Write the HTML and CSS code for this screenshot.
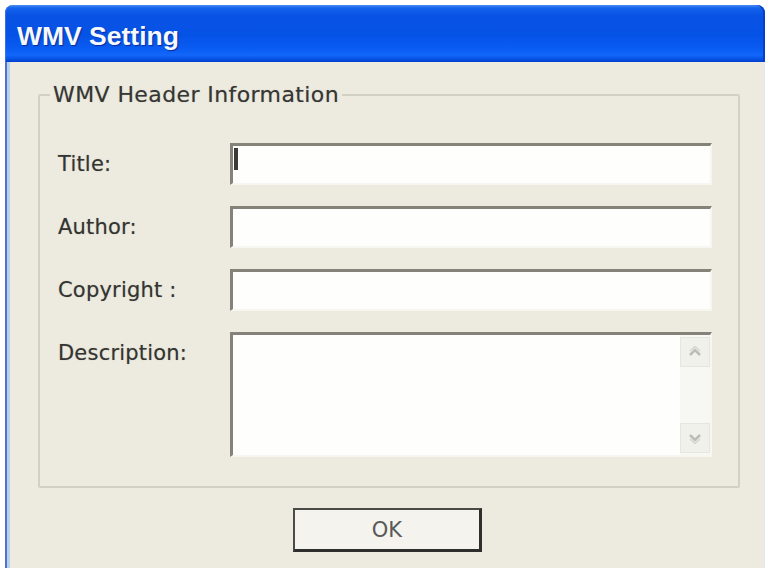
FILE: index.html
```html
<!DOCTYPE html>
<html lang="en">
<head>
<meta charset="utf-8">
<title>WMV Setting</title>
<link rel="stylesheet" href="styles.css">
</head>
<body>
<div class="window">
  <div class="titlebar"><span class="title">WMV Setting</span></div>
  <div class="content">
    <fieldset class="group">
      <legend class="group-label">WMV Header Information</legend>
      <div class="form">
        <label class="label">Title:</label>
        <div class="field"><span class="caret"></span></div>
        <label class="label">Author:</label>
        <div class="field"></div>
        <label class="label">Copyright :</label>
        <div class="field"></div>
        <label class="label">Description:</label>
        <div class="field area">
          <div class="scrollbar">
            <div class="sb-btn">
              <svg width="16" height="12" viewBox="0 0 16 12"><polyline points="3,9 8,4 13,9" fill="none" stroke="#bdbdb8" stroke-width="2.5"/><polyline points="3,5 8,0.5 13,5" fill="none" stroke="#d6d6d0" stroke-width="1.5"/></svg>
            </div>
            <div class="sb-track"></div>
            <div class="sb-btn">
              <svg width="16" height="12" viewBox="0 0 16 12"><polyline points="3,3 8,8 13,3" fill="none" stroke="#bdbdb8" stroke-width="2.5"/><polyline points="3,7 8,11.5 13,7" fill="none" stroke="#d6d6d0" stroke-width="1.5"/></svg>
            </div>
          </div>
        </div>
      </div>
    </fieldset>
    <div class="actions"><button class="ok">OK</button></div>
  </div>
</div>
</body>
</html>
```
FILE: styles.css
```css
html, body {
  margin: 0;
  padding: 0;
  background: #ffffff;
  overflow: hidden;
}
body {
  font-family: "DejaVu Sans", Verdana, sans-serif;
}
.window {
  margin: 5px 0 0 5px;
  width: 760px;
  height: 563px;
  display: flex;
  flex-direction: column;
}
.titlebar {
  box-sizing: border-box;
  height: 57px;
  padding: 16px 0 0 12px;
  border-radius: 8px 8px 0 0;
  background: linear-gradient(to bottom, #4a8ff0 0px, #1462ee 3px, #0a54e4 10px, #0552e6 30px, #0a5cf2 44px, #1268fa 50px, #0a58ec 53px, #0340cc 57px);
  box-shadow: inset 1px 0 #3a6fe0, inset -2px 0 #0a3ec8;
}
.title {
  font-family: "Liberation Sans", Arial, sans-serif;
  font-weight: bold;
  font-size: 26.5px;
  line-height: 30px;
  color: #f4f8ff;
  text-shadow: 1px 1px 1px #0b2a9a;
}
.content {
  flex: 1;
  box-sizing: border-box;
  background: #edebdf;
  border-left: 2px solid #5273c0;
  box-shadow: inset 3px 0 #b8d0f2, inset -1px 0 #e6e8ee;
  padding: 21px 25px 0 31px;
}
.group {
  margin: 0;
  padding: 0;
  border: 2px solid #d3d1c4;
  border-radius: 2px;
  min-width: 0;
}
.group-label {
  margin-left: 10px;
  padding: 0 3px;
  font-size: 22px;
  letter-spacing: 0.4px;
  line-height: 24px;
  color: #363634;
  text-shadow: 0 0 1px rgba(40, 40, 38, 0.35);
}
.form {
  display: grid;
  grid-template-columns: 172px 482px;
  grid-template-rows: 42px 42px 42px 125px;
  row-gap: 21px;
  padding: 36px 0 29px 18px;
}
.label {
  font-size: 21px;
  letter-spacing: 0.2px;
  line-height: 24px;
  padding-top: 9px;
  color: #343432;
  text-shadow: 0 0 1px rgba(40, 40, 38, 0.35);
}
.field {
  box-sizing: border-box;
  background: #fefefc;
  border-top: 3px solid #858379;
  border-left: 3px solid #858379;
  border-right: 2px solid #f7f6f0;
  border-bottom: 2px solid #f7f6f0;
  display: flex;
  padding-left: 1px;
}
.field.area {
  justify-content: flex-end;
  padding: 0;
}
.caret {
  width: 4px;
  height: 22px;
  margin-top: 2px;
  background: #3a3a38;
}
.scrollbar {
  width: 30px;
  display: flex;
  flex-direction: column;
  background: #f7f7f3;
  padding: 2px 0;
}
.sb-btn {
  height: 30px;
  display: flex;
  align-items: center;
  justify-content: center;
  background: #f1f1ec;
  border: 1px solid #e6e6e0;
  box-sizing: border-box;
}
.sb-track {
  flex: 1;
}
.actions {
  display: flex;
  justify-content: center;
  margin-top: 20px;
  padding-right: 3px;
}
.ok {
  box-sizing: border-box;
  width: 189px;
  height: 44px;
  background: #f4f3ee;
  border-top: 2px solid #4a4a46;
  border-left: 2px solid #4a4a46;
  border-right: 3px solid #2e2e2c;
  border-bottom: 3px solid #2e2e2c;
  font-family: "DejaVu Sans", Verdana, sans-serif;
  font-size: 21px;
  color: #5a5a58;
  padding: 0;
}
```
